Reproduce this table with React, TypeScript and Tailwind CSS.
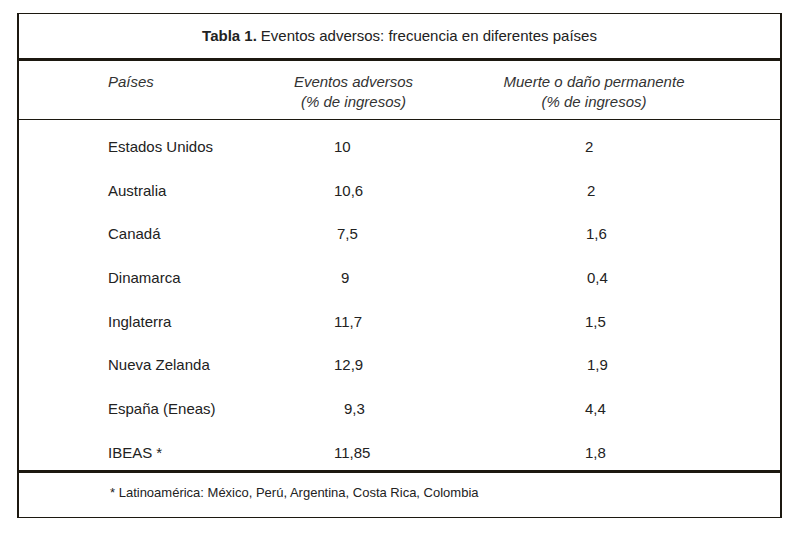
import React from 'react';

interface Row {
  country: string;
  events: string;
  eventsShift: string;
  harm: string;
  harmShift: string;
}

// offsets copy the uneven alignment of the printed table
const rows: Row[] = [
  { country: 'Estados Unidos', events: '10', eventsShift: 'ml-0', harm: '2', harmShift: 'ml-0' },
  { country: 'Australia', events: '10,6', eventsShift: 'ml-0', harm: '2', harmShift: 'ml-[2px]' },
  { country: 'Canadá', events: '7,5', eventsShift: 'ml-[3px]', harm: '1,6', harmShift: 'ml-[1px]' },
  { country: 'Dinamarca', events: '9', eventsShift: 'ml-[7px]', harm: '0,4', harmShift: 'ml-[2px]' },
  { country: 'Inglaterra', events: '11,7', eventsShift: 'ml-0', harm: '1,5', harmShift: 'ml-0' },
  { country: 'Nueva Zelanda', events: '12,9', eventsShift: 'ml-0', harm: '1,9', harmShift: 'ml-[2px]' },
  { country: 'España (Eneas)', events: '9,3', eventsShift: 'ml-[10px]', harm: '4,4', harmShift: 'ml-0' },
  { country: 'IBEAS *', events: '11,85', eventsShift: 'ml-0', harm: '1,8', harmShift: 'ml-0' },
];

const App: React.FC = () => {
  return (
    <div className="w-[799px] h-[536px] bg-white pt-[13px] pl-[17px] font-['Liberation_Sans',Arial,sans-serif] text-[#222]">
      <div className="w-[765px] border-t border-b border-l-2 border-r-2 border-[#1c1810]">
        {/* Title */}
        <div className="h-[47px] flex items-center justify-center text-[15px] border-b-[3px] border-[#1c1810] pt-[1px]">
          <span className="font-bold mr-[4px]">Tabla 1.</span>
          <span>Eventos adversos: frecuencia en diferentes países</span>
        </div>

        {/* Column headers */}
        <div className="h-[59px] flex italic text-[15px] text-[#333] leading-[20px] border-b border-[#1c1810]">
          <div className="w-[241px] pl-[89px] pt-[11px]">Países</div>
          <div className="w-[187px] text-center pt-[11px]">
            <div>Eventos adversos</div>
            <div>(% de ingresos)</div>
          </div>
          <div className="w-[294px] text-center pt-[11px]">
            <div>Muerte o daño permanente</div>
            <div>(% de ingresos)</div>
          </div>
        </div>

        {/* Body */}
        <div className="flex flex-col gap-[23.7px] pt-[17px] pb-[7px] text-[15px] border-b-[3px] border-[#1c1810]">
          {rows.map((r) => (
            <div key={r.country} className="h-[20px] flex items-center leading-[20px]">
              <div className="w-[315px] pl-[89px] whitespace-pre">{r.country}</div>
              <div className="w-[251px]">
                <span className={r.eventsShift}>{r.events}</span>
              </div>
              <div>
                <span className={r.harmShift}>{r.harm}</span>
              </div>
            </div>
          ))}
        </div>

        {/* Footnote */}
        <div className="h-[44px] pt-[12px] pl-[91px] text-[13px] leading-[16px]">
          * Latinoamérica: México, Perú, Argentina, Costa Rica, Colombia
        </div>
      </div>
    </div>
  );
};

export default App;
